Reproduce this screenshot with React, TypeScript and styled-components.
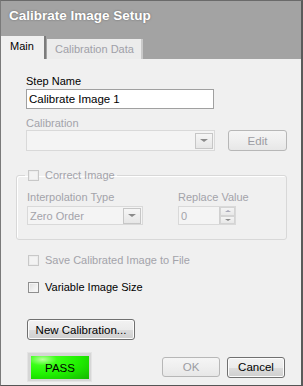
import React from "react";
import styled, { createGlobalStyle, css } from "styled-components";

const Global = createGlobalStyle`
  html, body { margin: 0; padding: 0; background: #f0f0f0; }
  body { font-family: "Liberation Sans", Arial, sans-serif; font-size: 11px; }
  #root { width: 303px; height: 386px; }
  * { box-sizing: border-box; }
`;

const Window = styled.div`
  width: 303px;
  height: 386px;
  display: flex;
  flex-direction: column;
  border-top: 1px solid #6a6a6a;
  border-left: 1px solid #7a7a7a;
  border-right: 2px solid #5a5a5a;
  border-bottom: 1px solid #555;
  background: #f0f0f0;
`;

const Header = styled.div`
  height: 58px;
  background: #a3a3a3;
  display: flex;
  flex-direction: column;
  flex-shrink: 0;
`;

const Title = styled.div`
  height: 35px;
  padding: 7px 0 0 8px;
  color: #fff;
  font-family: "Liberation Sans", Arial, sans-serif;
  font-weight: bold;
  font-size: 13.5px;
  line-height: 16px;
  text-shadow: 0 0 2px rgba(60, 60, 60, 0.6);
`;

const TabStrip = styled.div`
  height: 23px;
  display: flex;
  align-items: flex-end;
`;

const Tab = styled.div<{ $active?: boolean }>`
  display: flex;
  align-items: center;
  font-size: 11px;
  ${(p) =>
    p.$active
      ? css`
          width: 45px;
          height: 23px;
          padding: 0 0 3px 9px;
          background: #f0f0f0;
          color: #000;
          border-right: 2px solid #7c7c7c;
        `
      : css`
          width: 96px;
          height: 20px;
          padding: 0 0 1px 8px;
          background: #ececec;
          color: #a0a0a8;
          border-right: 2px solid #c9c9c9;
          margin-left: 1px;
        `}
`;

const Panel = styled.div`
  flex: 1;
  display: flex;
  flex-direction: column;
  padding: 15px 0 0 25px;
  color: #000;
`;

const Label = styled.div<{ $disabled?: boolean }>`
  height: 14px;
  line-height: 14px;
  font-size: 11px;
  color: ${(p) => (p.$disabled ? "#a3a3aa" : "#000")};
`;

const TextInput = styled.div`
  width: 188px;
  height: 20px;
  margin-top: 1px;
  border: 1px solid #a0a0a0;
  background: #fff;
  padding: 0 0 0 2px;
  line-height: 18px;
  font-size: 11.5px;
`;

const Row = styled.div<{ $gap?: number }>`
  display: flex;
  align-items: center;
  gap: ${(p) => p.$gap ?? 0}px;
`;

const Combo = styled.div<{ $w: number; $h: number }>`
  width: ${(p) => p.$w}px;
  height: ${(p) => p.$h}px;
  border: 1px solid #d9d9d9;
  background: #f4f4f4;
  display: flex;
  align-items: center;
  justify-content: space-between;
  padding: 0 1px 0 2px;
  color: #a3a3aa;
  font-size: 11px;
`;

const DropButton = styled.div<{ $h: number }>`
  width: 18px;
  height: ${(p) => p.$h}px;
  border: 1px solid #c6c6c6;
  background: linear-gradient(#f6f6f6, #e6e6e6);
  display: flex;
  align-items: center;
  justify-content: center;
`;

const Arrow = styled.div<{ $up?: boolean; $size?: number }>`
  width: 0;
  height: 0;
  border-left: ${(p) => p.$size ?? 4}px solid transparent;
  border-right: ${(p) => p.$size ?? 4}px solid transparent;
  ${(p) =>
    p.$up
      ? css`border-bottom: ${(p.$size ?? 4) - 1}px solid #a8a8b8;`
      : css`border-top: ${(p.$size ?? 4) - 1}px solid #8a8a8a;`}
`;

const Button = styled.div<{ $w: number; $h?: number; $disabled?: boolean }>`
  width: ${(p) => p.$w}px;
  height: ${(p) => p.$h ?? 21}px;
  border-radius: 3px;
  display: flex;
  align-items: center;
  justify-content: center;
  font-size: 11.5px;
  ${(p) =>
    p.$disabled
      ? css`
          border: 1px solid #b7b7b7;
          background: linear-gradient(#f5f5f5 0%, #efefef 50%, #e7e7e7 100%);
          color: #9c9ca2;
        `
      : css`
          border: 1px solid #707070;
          background: linear-gradient(#f2f2f2 0%, #ebebeb 50%, #dddddd 51%, #cfcfcf 100%);
          color: #000;
          box-shadow: inset 0 0 0 1px #fcfcfc;
        `}
`;

const Group = styled.fieldset`
  margin: 17px 0 0 -10px;
  width: 271px;
  height: 72px;
  border: 1px solid #d8d8d8;
  border-radius: 3px;
  padding: 2px 0 0 10px;
  box-shadow: 1px 1px 0 #fff inset;
`;

const Legend = styled.legend`
  padding: 0 2px 0 1px;
  margin-left: -2px;
`;

const CheckRow = styled.label<{ $disabled?: boolean }>`
  display: flex;
  align-items: center;
  gap: 6px;
  height: 14px;
  font-size: 11px;
  color: ${(p) => (p.$disabled ? "#a3a3aa" : "#000")};
`;

const Box = styled.span<{ $disabled?: boolean }>`
  width: 11px;
  height: 11px;
  margin-left: 2px;
  border: 1px solid ${(p) => (p.$disabled ? "#c8c8c8" : "#8f8f8f")};
  background: ${(p) =>
    p.$disabled
      ? "#f3f3f3"
      : "linear-gradient(135deg, #dcdcdc 0%, #f0f0f0 60%, #fafafa 100%)"};
  box-shadow: inset 0 0 0 1px ${(p) => (p.$disabled ? "#ececec" : "#f4f4f4")};
`;

const Column = styled.div`
  display: flex;
  flex-direction: column;
  gap: 2px;
`;

const Spinner = styled.div`
  width: 58px;
  height: 19px;
  border: 1px solid #d9d9d9;
  background: #f4f4f4;
  display: flex;
  justify-content: space-between;
  align-items: center;
  padding: 0 0 0 2px;
  color: #a3a3aa;
`;

const SpinButtons = styled.div`
  width: 16px;
  height: 17px;
  display: flex;
  flex-direction: column;
  border-left: 1px solid #d0d0d0;
`;

const SpinHalf = styled.div`
  flex: 1;
  display: flex;
  align-items: center;
  justify-content: center;
  background: linear-gradient(#f4f4f4, #e8e8e8);
  border: 1px solid #d4d4d4;
`;

const Footer = styled.div`
  display: flex;
  align-items: center;
  margin-top: 12px;
  padding-right: 16px;
`;

const PassFrame = styled.div`
  width: 65px;
  height: 30px;
  margin-left: 1px;
  padding: 3px 2px 2px 3px;
  background: #d6d6d6;
  border: 1px solid #e4e4e4;
`;

const PassLamp = styled.div`
  width: 100%;
  height: 100%;
  display: flex;
  align-items: center;
  justify-content: center;
  font-size: 11.5px;
  color: #000;
  background: radial-gradient(ellipse at 20% 15%, #b8ff9e 0%, #3bff17 22%, #20f000 55%, #14b800 100%);
`;

const Spacer = styled.div`
  flex: 1;
`;

export default function App() {
  return (
    <>
      <Global />
      <Window>
        <Header>
          <Title>Calibrate Image Setup</Title>
          <TabStrip>
            <Tab $active>Main</Tab>
            <Tab>Calibration Data</Tab>
          </TabStrip>
        </Header>
        <Panel>
          <Label>Step Name</Label>
          <TextInput>Calibrate Image 1</TextInput>
          <Label $disabled style={{ marginTop: 7 }}>
            Calibration
          </Label>
          <Row $gap={13}>
            <Combo $w={189} $h={21}>
              <span />
              <DropButton $h={16}>
                <Arrow />
              </DropButton>
            </Combo>
            <Button $w={59} $disabled>
              Edit
            </Button>
          </Row>
          <Group>
            <Legend>
              <CheckRow $disabled>
                <Box $disabled />
                Correct Image
              </CheckRow>
            </Legend>
            <Row $gap={35} style={{ alignItems: "flex-start", marginTop: 6 }}>
              <Column>
                <Label $disabled>Interpolation Type</Label>
                <Combo $w={116} $h={19}>
                  Zero Order
                  <DropButton $h={16}>
                    <Arrow />
                  </DropButton>
                </Combo>
              </Column>
              <Column>
                <Label $disabled>Replace Value</Label>
                <Spinner>
                  0
                  <SpinButtons>
                    <SpinHalf>
                      <Arrow $up $size={3} />
                    </SpinHalf>
                    <SpinHalf>
                      <Arrow $size={3} />
                    </SpinHalf>
                  </SpinButtons>
                </Spinner>
              </Column>
            </Row>
          </Group>
          <CheckRow $disabled style={{ marginTop: 13 }}>
            <Box $disabled />
            Save Calibrated Image to File
          </CheckRow>
          <CheckRow style={{ marginTop: 13 }}>
            <Box />
            Variable Image Size
          </CheckRow>
          <Row style={{ marginTop: 25, marginLeft: 1 }}>
            <Button $w={108}>New Calibration...</Button>
          </Row>
          <Footer>
            <PassFrame>
              <PassLamp>PASS</PassLamp>
            </PassFrame>
            <Spacer />
            <Button $w={58} $h={20} $disabled>
              OK
            </Button>
            <Button $w={58} $h={21} style={{ marginLeft: 7 }}>
              Cancel
            </Button>
          </Footer>
        </Panel>
      </Window>
    </>
  );
}
